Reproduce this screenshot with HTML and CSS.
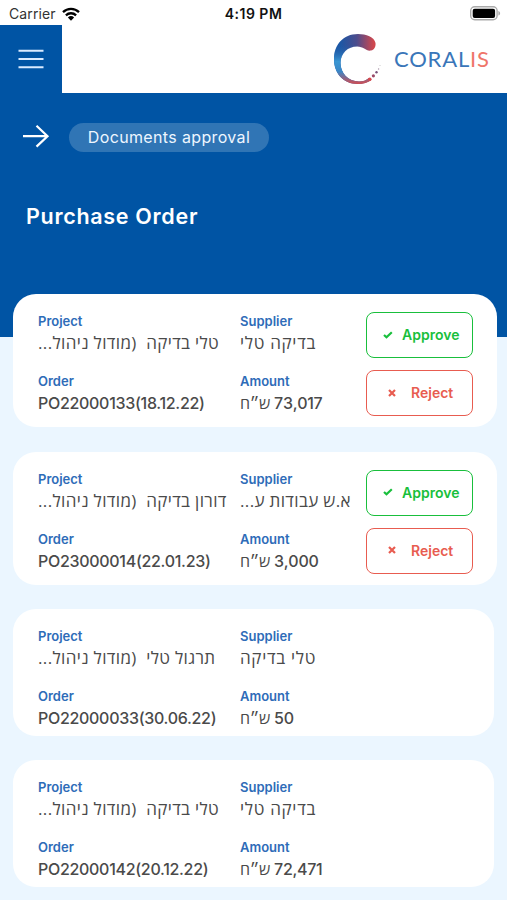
FILE: index.html
```html
<!DOCTYPE html>
<html lang="en">
<head>
<meta charset="utf-8">
<meta name="viewport" content="width=device-width, initial-scale=1">
<title>Purchase Order</title>
<link rel="stylesheet" href="styles.css">
</head>
<body>
<div class="status">
  <div class="carrier"><span>Carrier</span>
    <svg class="wifi" width="18" height="14" viewBox="0 0 18 14" fill="none" stroke="#000" stroke-width="2.3"><path d="M1 5.1a11.6 11.6 0 0 1 16 0M3.9 8.3a7.4 7.4 0 0 1 10.2 0"/><path d="M9 13.7 5.9 10.5a4.5 4.5 0 0 1 6.2 0z" fill="#000" stroke="none"/></svg>
  </div>
  <span class="time">4:19 PM</span>
  <svg class="battery" width="31" height="15" viewBox="0 0 31 15"><rect x=".7" y=".8" width="26.4" height="13" rx="4" fill="#fff" stroke="#aaa" stroke-width="1.4"/><rect x="2.7" y="2.7" width="22.4" height="9.2" rx="2" fill="#000"/><path d="M28.4 5v4.6c1-.4 1.7-1.200 1.700-2.300S29.400 5.400 28.400 5z" fill="#aaa"/></svg>
</div>
<header class="header">
  <button class="menu" aria-label="Menu"><svg width="26" height="20" viewBox="0 0 26 20" stroke="#d9eaff" stroke-width="2"><path d="M.5 1.700h25M.5 10h25M.5 18.200h25"/></svg></button>
  <div class="brand">
    <svg class="mark" width="48" height="52" viewBox="0 0 48 52">
      <defs>
        <linearGradient id="top" x1="0" y1="0" x2="1" y2="0"><stop offset=".15" stop-color="#1c57a5"/><stop offset=".55" stop-color="#4d4c8c"/><stop offset=".95" stop-color="#cf474e"/></linearGradient>
        <linearGradient id="side" x1="0" y1="0" x2="0" y2="1"><stop offset=".2" stop-color="#1c57a5" stop-opacity="0"/><stop offset=".55" stop-color="#3a97d3"/><stop offset=".75" stop-color="#3a86c6"/><stop offset="1" stop-color="#d44b50"/></linearGradient>
      </defs>
      <path d="M38 17.500C41 17 43 14 42.500 10C41.500 4 33 1 25 1C10 1 1 12 1 26C1 40 10 51 25 51C30 51 35 49.500 38 47.300L36 45C33 47.500 30 48.500 26 48.500C15 48.500 7.500 40 7.500 30C7.500 20 15 13.500 24 13.500C31 13.500 33 18.500 38 17.500Z" fill="url(#top)"/>
      <path d="M25 1C10 1 1 12 1 26C1 40 10 51 25 51C30 51 35 49.500 38 47.300L36 45C33 47.500 30 48.500 26 48.500C15 48.500 7.500 40 7.500 30C7.500 20 15 13.500 24 13.500Z" fill="url(#side)"/>
      <circle cx="36.800" cy="46.300" r="1.800" fill="#d8494e"/><circle cx="40.400" cy="42.800" r="1.600" fill="#9a4a68"/><circle cx="43.500" cy="39.300" r="1.200" fill="#775078"/><circle cx="45.600" cy="36" r=".7" fill="#a894a8"/><circle cx="47" cy="32.500" r=".5" fill="#bbb"/>
    </svg>
    <span class="name">CORAL<span class="accent">IS</span></span>
  </div>
</header>
<section class="hero">
  <div class="crumbs">
    <svg class="back" width="28" height="24" viewBox="0 0 28 24" fill="none" stroke="#fff" stroke-width="2.200"><path d="M1 12.200h24.500M14.500 1.700 25.500 12.200 14.500 22.600"/></svg>
    <span class="pill">Documents approval</span>
  </div>
  <h1>Purchase Order</h1>
</section>
<main class="list">
  <article class="card actionable">
    <dl class="fields">
      <div><dt>Project</dt><dd dir="rtl" class="hebrew">טלי בדיקה  (מודול ניהול...</dd></div>
      <div><dt>Supplier</dt><dd dir="rtl" class="hebrew supplier">בדיקה טלי</dd></div>
      <div><dt>Order</dt><dd>PO22000133(18.12.22)</dd></div>
      <div><dt>Amount</dt><dd dir="rtl">73,017 ש״ח</dd></div>
    </dl>
    <div class="actions">
      <button class="btn approve"><svg width="10" height="8" viewBox="0 0 10 8" fill="none" stroke="currentColor" stroke-width="2.200"><path d="M1 4 3.500 6.300 8.800 1.300"/></svg><span>Approve</span></button>
      <button class="btn reject"><svg width="8" height="8" viewBox="0 0 8 8" stroke="currentColor" stroke-width="2.200"><path d="m1 1 6 6M7 1 1 7"/></svg><span>Reject</span></button>
    </div>
  </article>
  <article class="card actionable">
    <dl class="fields">
      <div><dt>Project</dt><dd dir="rtl" class="hebrew">דורון בדיקה  (מודול ניהול...</dd></div>
      <div><dt>Supplier</dt><dd dir="rtl" class="hebrew">א.ש עבודות ע...</dd></div>
      <div><dt>Order</dt><dd>PO23000014(22.01.23)</dd></div>
      <div><dt>Amount</dt><dd dir="rtl">3,000 ש״ח</dd></div>
    </dl>
    <div class="actions">
      <button class="btn approve"><svg width="10" height="8" viewBox="0 0 10 8" fill="none" stroke="currentColor" stroke-width="2.200"><path d="M1 4 3.500 6.300 8.800 1.300"/></svg><span>Approve</span></button>
      <button class="btn reject"><svg width="8" height="8" viewBox="0 0 8 8" stroke="currentColor" stroke-width="2.200"><path d="m1 1 6 6M7 1 1 7"/></svg><span>Reject</span></button>
    </div>
  </article>
  <article class="card">
    <dl class="fields">
      <div><dt>Project</dt><dd dir="rtl" class="hebrew">תרגול טלי  (מודול ניהול...</dd></div>
      <div><dt>Supplier</dt><dd dir="rtl" class="hebrew supplier">טלי בדיקה</dd></div>
      <div><dt>Order</dt><dd>PO22000033(30.06.22)</dd></div>
      <div><dt>Amount</dt><dd dir="rtl">50 ש״ח</dd></div>
    </dl>
  </article>
  <article class="card">
    <dl class="fields">
      <div><dt>Project</dt><dd dir="rtl" class="hebrew">טלי בדיקה  (מודול ניהול...</dd></div>
      <div><dt>Supplier</dt><dd dir="rtl" class="hebrew supplier">בדיקה טלי</dd></div>
      <div><dt>Order</dt><dd>PO22000142(20.12.22)</dd></div>
      <div><dt>Amount</dt><dd dir="rtl">72,471 ש״ח</dd></div>
    </dl>
  </article>
</main>
</body>
</html>
```
FILE: styles.css
```css
* { box-sizing: border-box; }
body { margin: 0; height: 900px; overflow: hidden; background: #ebf6ff; font-family: Inter, "Open Sans", "Noto Sans", sans-serif; }
button { padding: 0; margin: 0; border: 0; background: none; font: inherit; }
svg { display: block; flex: none; }
.status { height: 25px; background: #fff; display: grid; grid-template-columns: 1fr auto 1fr; align-items: center; padding: 2px 6px 0 9px; color: #111; }
.carrier { display: flex; align-items: center; gap: 6px; font-size: 14px; letter-spacing: .1px; color: #333; }
.time { font-size: 14px; font-weight: 600; letter-spacing: .5px; margin-right: 3px; }
.battery { justify-self: end; }
.header { height: 68px; background: #fff; display: flex; justify-content: space-between; }
.menu { width: 62px; height: 68px; background: #0054a4; display: grid; place-items: center; }
.brand { display: flex; align-items: center; padding-right: 18px; }
.mark { margin-bottom: 1px; }
.name { margin: 0 0 2px 13px; font-family: Lato, sans-serif; font-size: 22px; letter-spacing: .8px; color: #3a76b9; width: 95px; white-space: nowrap; }
.accent { color: #ef756a; }
.hero { height: 244px; background: #0054a4; padding: 30px 22px 0; color: #fff; }
.crumbs { display: flex; align-items: center; gap: 19px; }
.back { margin-bottom: 4px; }
.pill { width: 200px; height: 29px; border-radius: 15px; background: #3075b5; color: #eef6ff; text-align: center; font-size: 16px; line-height: 29px; letter-spacing: .35px; }
h1 { margin: 50.5px 0 0 4px; font-size: 21.5px; line-height: 26px; font-weight: 600; letter-spacing: .7px; }
.list { margin: -43px 10px 0 13px; display: flex; flex-direction: column; gap: 24.5px; position: relative; }
.card { width: 481px; height: 126.500px; background: #fff; border-radius: 23px; padding: 18px 24px 0 25px; display: flex; justify-content: space-between; }
.actionable { width: 484px; height: 133px; }
.fields { margin: 0; display: grid; grid-template-columns: 202px 115px; grid-template-rows: 60px 60px; }
dt { font-size: 13px; line-height: 18px; font-weight: 600; color: #2e6cb8; }
dd { margin: 2px 0 0; font-size: 16px; line-height: 22px; font-weight: 500; letter-spacing: -.3px; color: #4a4a4a; text-align: left; white-space: pre; }
.hebrew { font-family: "Open Sans", "Noto Sans", sans-serif; font-size: 17px; letter-spacing: .35px; }
.supplier { letter-spacing: .7px; }
.actions { display: flex; flex-direction: column; gap: 12px; }
.btn { width: 107px; height: 46px; border: 1.500px solid; border-radius: 8px; display: flex; align-items: center; font-size: 14px; font-weight: 600; padding-bottom: 1px; }
.approve { color: #19bf3c; padding-left: 16px; gap: 9px; }
.reject { color: #e85c50; padding-left: 21px; gap: 15px; }
```
